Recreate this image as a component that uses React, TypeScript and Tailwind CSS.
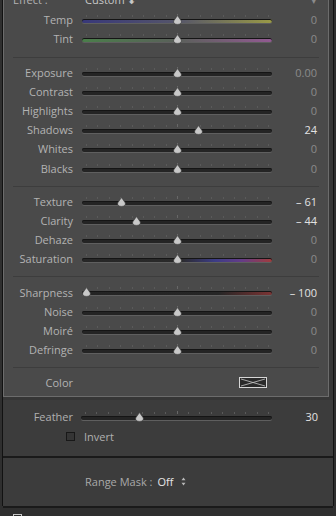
import React from "react";

type SliderProps = {
  pos: number;
  track?: string;
  width?: string;
};

const ticks = Array.from({ length: 17 }, (_, i) => i);

const Slider = ({ pos, track = "bg-[#242424]", width = "w-[190px]" }: SliderProps) => (
  <div className={`relative h-full shrink-0 ${width}`}>
    {ticks.map((i) => (
      <span
        key={i}
        className={
          i === 8
            ? "absolute top-[4px] h-[3px] w-px bg-[#676767]"
            : "absolute top-[5px] h-[2px] w-px bg-[#5a5a5a]"
        }
        style={{ left: `calc(4px + ${i / 16} * (100% - 8px))` }}
      />
    ))}
    <div
      className={`absolute left-0 right-0 top-[9px] h-[4px] rounded-full shadow-[inset_0_1px_0_#151515,0_1px_0_#5f5f5f] ${track}`}
    />
    <svg
      className="absolute top-[5px]"
      style={{ left: `calc(4px + ${pos} * (100% - 8px) - 4.5px)` }}
      width="9"
      height="10"
      viewBox="0 0 9 10"
    >
      <path
        d="M4.5 0.6 L8.4 6 Q8.6 9.4 4.5 9.4 Q0.4 9.4 0.6 6 Z"
        fill="#c8c8c8"
        stroke="#333"
        strokeWidth="0.6"
      />
    </svg>
  </div>
);

type RowProps = {
  label: string;
  value: string;
  v: number;
  track?: string;
};

const Row = ({ label, value, v, track }: RowProps) => (
  <div className="flex h-[19.2px] items-center">
    <div className="w-[69px] shrink-0 text-right text-[#b3b3b3]">{label}</div>
    <div className="ml-[9px] h-full">
      <Slider pos={0.5 + v / 200} track={track} />
    </div>
    <div
      className={`flex-1 pr-[11px] text-right ${v === 0 ? "text-[#8b8b8b]" : "text-[#e2e2e2]"}`}
    >
      {value}
    </div>
  </div>
);

const Sep = () => (
  <div className="px-[9px] pt-[8px] pb-[5px]">
    <div className="h-px bg-[#3d3d3d]" />
  </div>
);

export default function App() {
  return (
    <div
      className="h-[516px] w-[336px] overflow-hidden bg-[#2f2f2f] pl-[2px] text-[11px] leading-none"
      style={{ fontFamily: '"Open Sans", "Noto Sans", sans-serif' }}
    >
      <div className="h-full w-[332px] border-x border-[#121212] bg-[#3c3c3c]">
        <div className="bg-[#363636] pr-[4px] pb-[3px]">
          <div className="-mt-[10px] border border-[#6c6c6c] bg-[#4a4a4a]">
            <div className="flex h-[19.2px] items-center pb-[3px] text-[#b3b3b3]">
              <div className="w-[81px] shrink-0 pl-[9px]">Effect :</div>
              <div className="text-[#c8c8c8]">Custom ⬍</div>
              <div className="flex-1 pr-[11px] text-right text-[#8b8b8b]">▾</div>
            </div>
            <Row
              label="Temp"
              value="0"
              v={0}
              track="bg-[linear-gradient(to_right,#38387a,#55556a_50%,#9a9a46)]"
            />
            <Row
              label="Tint"
              value="0"
              v={0}
              track="bg-[linear-gradient(to_right,#4a7e4a,#5a605a_50%,#925a92)]"
            />
            <Sep />
            <Row label="Exposure" value="0.00" v={0} />
            <Row label="Contrast" value="0" v={0} />
            <Row label="Highlights" value="0" v={0} />
            <Row label="Shadows" value="24" v={24} />
            <Row label="Whites" value="0" v={0} />
            <Row label="Blacks" value="0" v={0} />
            <Sep />
            <Row label="Texture" value="– 61" v={-61} />
            <Row label="Clarity" value="– 44" v={-44} />
            <Row label="Dehaze" value="0" v={0} />
            <Row
              label="Saturation"
              value="0"
              v={0}
              track="bg-[linear-gradient(to_right,#262626_0%,#2a2a2a_52%,#3c3c86_70%,#643c88_84%,#a23c3c_100%)]"
            />
            <Sep />
            <Row
              label="Sharpness"
              value="– 100"
              v={-100}
              track="bg-[linear-gradient(to_right,#242424_0%,#262626_72%,#7c3434_100%)]"
            />
            <Row label="Noise" value="0" v={0} />
            <Row label="Moiré" value="0" v={0} />
            <Row label="Defringe" value="0" v={0} />
            <Sep />
            <div className="flex h-[19.2px] items-center">
              <div className="w-[69px] shrink-0 text-right text-[#b3b3b3]">Color</div>
              <svg className="ml-[166px]" width="28" height="11" viewBox="0 0 28 11">
                <rect x="0.5" y="0.5" width="27" height="10" fill="#2a2a2a" stroke="#d6d6d6" />
                <path d="M2 2 L14 5.5 L26 2 M2 9 L14 5.5 L26 9" stroke="#c8c8c8" strokeWidth="0.8" fill="none" />
              </svg>
            </div>
            <div className="h-[4px]" />
          </div>
        </div>

        <div className="pt-[7px] pb-[10px]">
          <div className="flex h-[19.2px] items-center">
            <div className="w-[70px] shrink-0 text-right text-[#b0b0b0]">Feather</div>
            <div className="ml-[8px] h-full">
              <Slider pos={0.3} width="w-[191px]" track="bg-[#242424]" />
            </div>
            <div className="flex-1 pr-[15px] text-right text-[#e2e2e2]">30</div>
          </div>
          <div className="flex h-[19.2px] items-center">
            <div className="ml-[63px] h-[9px] w-[9px] border border-[#181818] bg-[#353535]" />
            <div className="ml-[9px] text-[#b0b0b0]">Invert</div>
          </div>
        </div>
        <div className="h-[2px] bg-[#1a1a1a]" />
        <div className="flex h-[48px] items-center pl-[82px]">
          <span className="text-[#a9a9a9]">Range Mask :</span>
          <span className="ml-[5px] text-[#e6e6e6]">Off</span>
          <svg className="ml-[8px]" width="5" height="9" viewBox="0 0 5 9">
            <path d="M2.5 0.5 L4.5 3.2 L0.5 3.2 Z M2.5 8.5 L4.5 5.8 L0.5 5.8 Z" fill="#b8b8b8" />
          </svg>
        </div>
        <div className="h-[2px] bg-[#1a1a1a]" />
        <div className="pt-[6px] pl-[10px]">
          <div className="h-[9px] w-[9px] border border-[#c8c8c8] bg-[#2c2c2c]" />
        </div>
      </div>
    </div>
  );
}
